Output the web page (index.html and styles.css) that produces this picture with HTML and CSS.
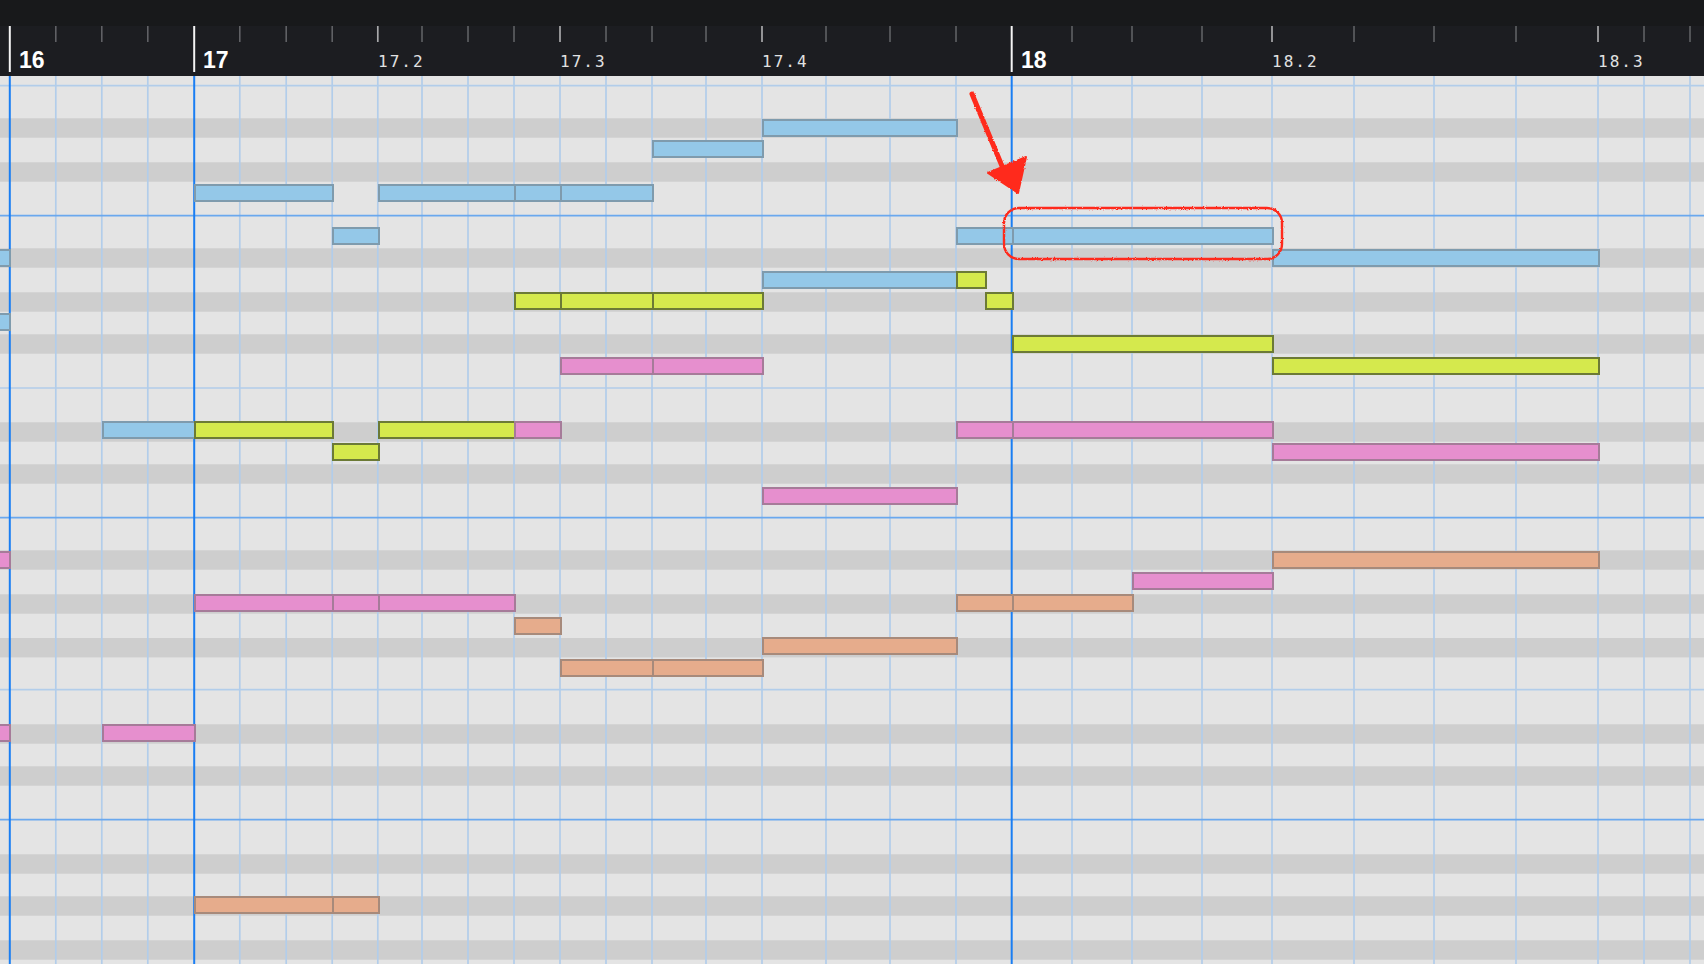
FILE: index.html
```html
<!DOCTYPE html>
<html lang="en">
<head>
<meta charset="utf-8">
<title>Piano Roll</title>
<link rel="stylesheet" href="styles.css">
</head>
<body>
<div class="app">
  <div class="titlebar"></div>

  <div class="ruler">
    <svg class="ruler-ticks" width="1704" height="50" viewBox="0 0 1704 50">
      <g class="tick-minor">
        <line x1="55.8" y1="0" x2="55.8" y2="16"/><line x1="101.8" y1="0" x2="101.8" y2="16"/><line x1="147.8" y1="0" x2="147.8" y2="16"/>
        <line x1="239.8" y1="0" x2="239.8" y2="16"/><line x1="286.2" y1="0" x2="286.2" y2="16"/><line x1="332.2" y1="0" x2="332.2" y2="16"/>
        <line x1="422" y1="0" x2="422" y2="16"/><line x1="468" y1="0" x2="468" y2="16"/><line x1="514" y1="0" x2="514" y2="16"/>
        <line x1="606" y1="0" x2="606" y2="16"/><line x1="652" y1="0" x2="652" y2="16"/><line x1="706" y1="0" x2="706" y2="16"/>
        <line x1="826" y1="0" x2="826" y2="16"/><line x1="890" y1="0" x2="890" y2="16"/><line x1="956" y1="0" x2="956" y2="16"/>
        <line x1="1072" y1="0" x2="1072" y2="16"/><line x1="1132" y1="0" x2="1132" y2="16"/><line x1="1202" y1="0" x2="1202" y2="16"/>
        <line x1="1354" y1="0" x2="1354" y2="16"/><line x1="1434" y1="0" x2="1434" y2="16"/><line x1="1516" y1="0" x2="1516" y2="16"/>
        <line x1="1644" y1="0" x2="1644" y2="16"/><line x1="1690" y1="0" x2="1690" y2="16"/>
      </g>
      <g class="tick-beat">
        <line x1="377.8" y1="0" x2="377.8" y2="16"/><line x1="560" y1="0" x2="560" y2="16"/><line x1="762" y1="0" x2="762" y2="16"/>
        <line x1="1272" y1="0" x2="1272" y2="16"/><line x1="1598" y1="0" x2="1598" y2="16"/>
      </g>
      <g class="tick-bar">
        <line x1="9.8" y1="0" x2="9.8" y2="46"/><line x1="194.2" y1="0" x2="194.2" y2="46"/><line x1="1011.7" y1="0" x2="1011.7" y2="46"/>
      </g>
    </svg>
    <span class="bar-label" style="left:19px">16</span>
    <span class="bar-label" style="left:203px">17</span>
    <span class="beat-label" style="left:378px">17.2</span>
    <span class="beat-label" style="left:560px">17.3</span>
    <span class="beat-label" style="left:762px">17.4</span>
    <span class="bar-label" style="left:1021px">18</span>
    <span class="beat-label" style="left:1272px">18.2</span>
    <span class="beat-label" style="left:1598px">18.3</span>
  </div>

  <div class="roll">
    <svg class="grid" width="1704" height="888" viewBox="0 0 1704 888">
      <g class="keys-black">
        <rect x="0" y="42.3" width="1704" height="19.4"/><rect x="0" y="86.3" width="1704" height="19.4"/>
        <rect x="0" y="172.3" width="1704" height="19.4"/><rect x="0" y="216.3" width="1704" height="19.4"/>
        <rect x="0" y="258.3" width="1704" height="19.4"/><rect x="0" y="346.3" width="1704" height="19.4"/>
        <rect x="0" y="388.3" width="1704" height="19.4"/><rect x="0" y="474.3" width="1704" height="19.4"/>
        <rect x="0" y="518.3" width="1704" height="19.4"/><rect x="0" y="562" width="1704" height="19.4"/>
        <rect x="0" y="648.3" width="1704" height="19.4"/><rect x="0" y="690.3" width="1704" height="19.4"/>
        <rect x="0" y="778.3" width="1704" height="19.4"/><rect x="0" y="820.3" width="1704" height="19.4"/>
        <rect x="0" y="864.3" width="1704" height="19.4"/>
      </g>
      <g class="line-minor">
        <line x1="55.8" y1="0" x2="55.8" y2="888"/><line x1="101.8" y1="0" x2="101.8" y2="888"/><line x1="147.8" y1="0" x2="147.8" y2="888"/>
        <line x1="239.8" y1="0" x2="239.8" y2="888"/><line x1="286.2" y1="0" x2="286.2" y2="888"/><line x1="332.2" y1="0" x2="332.2" y2="888"/>
        <line x1="377.8" y1="0" x2="377.8" y2="888"/><line x1="422" y1="0" x2="422" y2="888"/><line x1="468" y1="0" x2="468" y2="888"/>
        <line x1="514" y1="0" x2="514" y2="888"/><line x1="560" y1="0" x2="560" y2="888"/><line x1="606" y1="0" x2="606" y2="888"/>
        <line x1="652" y1="0" x2="652" y2="888"/><line x1="706" y1="0" x2="706" y2="888"/><line x1="762" y1="0" x2="762" y2="888"/>
        <line x1="826" y1="0" x2="826" y2="888"/><line x1="890" y1="0" x2="890" y2="888"/><line x1="956" y1="0" x2="956" y2="888"/>
        <line x1="1072" y1="0" x2="1072" y2="888"/><line x1="1132" y1="0" x2="1132" y2="888"/><line x1="1202" y1="0" x2="1202" y2="888"/>
        <line x1="1272" y1="0" x2="1272" y2="888"/><line x1="1354" y1="0" x2="1354" y2="888"/><line x1="1434" y1="0" x2="1434" y2="888"/>
        <line x1="1516" y1="0" x2="1516" y2="888"/><line x1="1598" y1="0" x2="1598" y2="888"/><line x1="1644" y1="0" x2="1644" y2="888"/>
        <line x1="1690" y1="0" x2="1690" y2="888"/>
        <line x1="0" y1="9.7" x2="1704" y2="9.7"/><line x1="0" y1="312" x2="1704" y2="312"/><line x1="0" y1="613.7" x2="1704" y2="613.7"/>
      </g>
      <g class="line-octave">
        <line x1="0" y1="139.7" x2="1704" y2="139.7"/><line x1="0" y1="441.7" x2="1704" y2="441.7"/><line x1="0" y1="743.7" x2="1704" y2="743.7"/>
      </g>
      <g class="line-bar">
        <line x1="9.8" y1="0" x2="9.8" y2="888"/><line x1="194.2" y1="0" x2="194.2" y2="888"/><line x1="1011.7" y1="0" x2="1011.7" y2="888"/>
      </g>
    </svg>

    <!-- blue notes -->
    <div class="note blue" style="left:762px;top:43px;width:196px"></div>
    <div class="note blue" style="left:652px;top:64px;width:112px"></div>
    <div class="note blue" style="left:194px;top:108px;width:140px"></div>
    <div class="note blue" style="left:378px;top:108px;width:138px"></div>
    <div class="note blue" style="left:514px;top:108px;width:48px"></div>
    <div class="note blue" style="left:560px;top:108px;width:94px"></div>
    <div class="note blue" style="left:332px;top:151px;width:48px"></div>
    <div class="note blue" style="left:956px;top:151px;width:58px"></div>
    <div class="note blue" style="left:1012px;top:151px;width:262px"></div>
    <div class="note blue" style="left:-21px;top:173px;width:32px"></div>
    <div class="note blue" style="left:1272px;top:173px;width:328px"></div>
    <div class="note blue" style="left:762px;top:195px;width:196px"></div>
    <div class="note blue" style="left:-21px;top:237px;width:32px"></div>
    <div class="note blue" style="left:102px;top:345px;width:94px"></div>

    <!-- yellow notes -->
    <div class="note yellow" style="left:956px;top:195px;width:31px"></div>
    <div class="note yellow" style="left:514px;top:216px;width:48px"></div>
    <div class="note yellow" style="left:560px;top:216px;width:94px"></div>
    <div class="note yellow" style="left:652px;top:216px;width:112px"></div>
    <div class="note yellow" style="left:985px;top:216px;width:29px"></div>
    <div class="note yellow" style="left:1012px;top:259px;width:262px"></div>
    <div class="note yellow" style="left:1272px;top:281px;width:328px"></div>
    <div class="note yellow" style="left:194px;top:345px;width:140px"></div>
    <div class="note yellow" style="left:378px;top:345px;width:138px"></div>
    <div class="note yellow" style="left:332px;top:367px;width:48px"></div>

    <!-- pink notes -->
    <div class="note pink" style="left:560px;top:281px;width:94px"></div>
    <div class="note pink" style="left:652px;top:281px;width:112px"></div>
    <div class="note pink" style="left:514px;top:345px;width:48px"></div>
    <div class="note pink" style="left:956px;top:345px;width:58px"></div>
    <div class="note pink" style="left:1012px;top:345px;width:262px"></div>
    <div class="note pink" style="left:1272px;top:367px;width:328px"></div>
    <div class="note pink" style="left:762px;top:411px;width:196px"></div>
    <div class="note pink" style="left:-21px;top:475px;width:32px"></div>
    <div class="note pink" style="left:1132px;top:496px;width:142px"></div>
    <div class="note pink" style="left:194px;top:518px;width:140px"></div>
    <div class="note pink" style="left:332px;top:518px;width:48px"></div>
    <div class="note pink" style="left:378px;top:518px;width:138px"></div>
    <div class="note pink" style="left:-21px;top:648px;width:32px"></div>
    <div class="note pink" style="left:102px;top:648px;width:94px"></div>

    <!-- orange notes -->
    <div class="note orange" style="left:1272px;top:475px;width:328px"></div>
    <div class="note orange" style="left:956px;top:518px;width:58px"></div>
    <div class="note orange" style="left:1012px;top:518px;width:122px"></div>
    <div class="note orange" style="left:514px;top:541px;width:48px"></div>
    <div class="note orange" style="left:762px;top:561px;width:196px"></div>
    <div class="note orange" style="left:560px;top:583px;width:94px"></div>
    <div class="note orange" style="left:652px;top:583px;width:112px"></div>
    <div class="note orange" style="left:194px;top:820px;width:140px"></div>
    <div class="note orange" style="left:332px;top:820px;width:48px"></div>

    <svg class="marks" width="1704" height="888" viewBox="0 0 1704 888">
      <defs>
        <filter id="rough" x="-5%" y="-5%" width="110%" height="110%">
          <feTurbulence type="fractalNoise" baseFrequency="0.9" numOctaves="2" seed="4" result="noise"/>
          <feDisplacementMap in="SourceGraphic" in2="noise" scale="2.6" xChannelSelector="R" yChannelSelector="G"/>
        </filter>
      </defs>
      <g filter="url(#rough)">
        <rect class="mark-line" x="1004" y="132" width="278" height="51" rx="15" ry="15"/>
        <path class="mark-shaft" d="M972 18 L1002 90"/>
        <path class="mark-head" d="M988 97 L1026 81 L1018 117 Z"/>
      </g>
    </svg>
  </div>
</div>
</body>
</html>
```

FILE: styles.css
```css
html, body {
  margin: 0;
  padding: 0;
  background: #e4e4e4;
  overflow: hidden;
}

.app {
  width: 1704px;
  height: 964px;
  display: flex;
  flex-direction: column;
}

.titlebar {
  flex: none;
  height: 26px;
  background: #18191b;
}

.ruler {
  flex: none;
  position: relative;
  height: 50px;
  background: #1c1d21;
}

.ruler-ticks {
  display: block;
}

.tick-minor line {
  stroke: #606165;
  stroke-width: 1.6;
}

.tick-beat line {
  stroke: #a8a8aa;
  stroke-width: 1.7;
}

.tick-bar line {
  stroke: #f4f4f4;
  stroke-width: 2;
}

.bar-label {
  position: absolute;
  top: 23px;
  font-family: "Liberation Sans", Arial, sans-serif;
  font-weight: bold;
  font-size: 23px;
  line-height: 23px;
  color: #ffffff;
}

.beat-label {
  position: absolute;
  top: 28px;
  font-family: "DejaVu Sans Mono", "Liberation Mono", monospace;
  font-size: 16px;
  line-height: 16px;
  letter-spacing: 2px;
  color: #e2e2e2;
}

.roll {
  flex: 1;
  position: relative;
  overflow: hidden;
  background: #e4e4e4;
}

.grid {
  display: block;
}

.keys-black rect {
  fill: #cecece;
}

.line-minor line {
  stroke: #b2cdea;
  stroke-width: 1.7;
}

.line-octave line {
  stroke: #6aa8ee;
  stroke-width: 1.7;
}

.line-bar line {
  stroke: #1a7ef3;
  stroke-width: 2;
}

.note {
  position: absolute;
  height: 18px;
  box-sizing: border-box;
  border: 2px solid;
}

.note.blue {
  background: #94c8e8;
  border-color: #7f9bad;
}

.note.yellow {
  background: #d5e94d;
  border-color: #6c7a36;
}

.note.pink {
  background: #e68fce;
  border-color: #a67b99;
}

.note.orange {
  background: #e6ac8c;
  border-color: #a78a7b;
}

.marks {
  position: absolute;
  left: 0;
  top: 0;
  pointer-events: none;
}

.mark-line {
  fill: none;
  stroke: #ff2b1c;
  stroke-width: 2.4;
}

.mark-shaft {
  fill: none;
  stroke: #ff2b1c;
  stroke-width: 5;
  stroke-linecap: round;
}

.mark-head {
  fill: #ff2b1c;
  stroke: #ff2b1c;
  stroke-width: 2;
  stroke-linejoin: round;
}
```
